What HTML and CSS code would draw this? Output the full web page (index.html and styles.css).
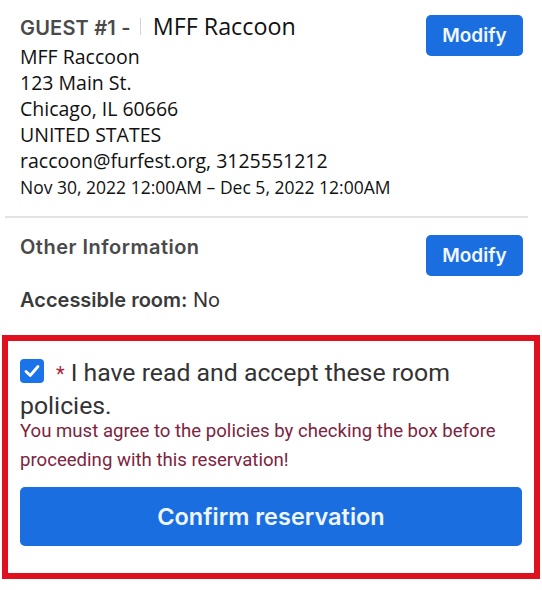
FILE: index.html
```html
<!DOCTYPE html>
<html>
<head>
<meta charset="utf-8">
<link rel="stylesheet" href="styles.css">
</head>
<body>
<div class="page">
  <section class="guest">
    <div class="guest-info">
      <div class="guest-head"><span class="label">GUEST #1 -</span><span class="caret"></span><span class="guest-name">MFF Raccoon</span></div>
      <div class="addr">MFF Raccoon</div>
      <div class="addr">123 Main St.</div>
      <div class="addr">Chicago, IL 60666</div>
      <div class="addr">UNITED STATES</div>
      <div class="addr">raccoon@furfest.org, 3125551212</div>
      <div class="addr dates">Nov 30, 2022 12:00AM – Dec 5, 2022 12:00AM</div>
    </div>
    <button class="modify">Modify</button>
  </section>
  <hr class="divider">
  <section class="other">
    <div class="other-info">
      <div class="label heading">Other Information</div>
      <div class="access"><b>Accessible room:</b> No</div>
    </div>
    <button class="modify">Modify</button>
  </section>
  <section class="policy">
    <label class="accept">
      <span class="check"><svg width="24" height="24" viewBox="0 0 24 24"><rect x="0" y="0" width="24" height="24" rx="4" fill="#1a73e8"/><path d="M6 12.5 L10.2 16.5 L18 7.5" fill="none" stroke="#fff" stroke-width="2.8" stroke-linecap="round" stroke-linejoin="round"/></svg></span><span class="req">*</span><span class="accept-text">I have read and accept these room policies.</span>
    </label>
    <p class="error">You must agree to the policies by checking the box before proceeding with this reservation!</p>
    <button class="confirm">Confirm reservation</button>
  </section>
</div>
</body>
</html>
```
FILE: styles.css
```css
html, body {
  margin: 0;
  padding: 0;
  background: #fff;
}
.page {
  width: 542px;
  height: 590px;
  overflow: hidden;
}
.guest {
  display: flex;
  justify-content: space-between;
  align-items: flex-start;
  padding: 10px 19px 0 20px;
}
.guest-head {
  display: flex;
  align-items: baseline;
  height: 33.5px;
}
.label {
  font-family: "Inter", sans-serif;
  font-weight: 600;
  font-size: 20px;
  line-height: 24px;
  letter-spacing: 0.2px;
  color: #4a4a4a;
}
.label.heading {
  letter-spacing: 0.5px;
}
.caret {
  display: inline-block;
  width: 1px;
  height: 17px;
  background: #d4d4d4;
  margin: 0 12px 0 9px;
  align-self: center;
}
.guest-name {
  font-family: "Open Sans", sans-serif;
  font-size: 23.3px;
  color: #111;
}
.addr {
  font-family: "Open Sans", sans-serif;
  font-size: 19.5px;
  line-height: 26px;
  color: #111;
}
.addr.dates {
  font-size: 17.5px;
  line-height: 26px;
}
.modify {
  font-family: "Inter", sans-serif;
  font-weight: 600;
  font-size: 19px;
  color: #f2f8ff;
  background: #1a6ee0;
  border: none;
  border-radius: 5px;
  width: 97px;
  height: 41px;
  margin-top: 5px;
  padding: 0;
}
.divider {
  border: none;
  border-top: 2px solid #e3e3e3;
  margin: 16px 14px 0 5px;
}
.other {
  display: flex;
  justify-content: space-between;
  align-items: flex-start;
  box-sizing: border-box;
  padding: 17px 19px 0 20px;
  height: 117px;
}
.other .modify {
  margin-top: 0;
}
.access {
  font-family: "Inter", sans-serif;
  font-size: 20px;
  line-height: 24px;
  color: #333;
  margin-top: 29px;
}
.access b {
  font-weight: 600;
  color: #3a3a3a;
}
.policy {
  border: 6px solid #e0101e;
  margin: 0 2px 0 2px;
  padding: 16px 12px 27px 12px;
}
.accept {
  display: block;
  font-family: "Roboto", sans-serif;
  font-size: 24.8px;
  line-height: 31px;
  color: #333;
}
.check {
  display: inline-block;
  width: 24px;
  height: 24px;
  vertical-align: -2px;
  margin-right: 12px;
}
.check svg {
  display: block;
}
.req {
  color: #b0243c;
  font-size: 20px;
  margin-right: 6px;
}
.error {
  font-family: "Roboto", sans-serif;
  font-size: 18.6px;
  line-height: 29px;
  color: #7d2440;
  margin: -4px 0 12px 0;
}
.confirm {
  display: block;
  width: 100%;
  height: 59px;
  background: #1a6ee0;
  color: #eef6ff;
  border: none;
  border-radius: 5px;
  font-family: "Inter", sans-serif;
  font-weight: 600;
  font-size: 23.5px;
}
```
